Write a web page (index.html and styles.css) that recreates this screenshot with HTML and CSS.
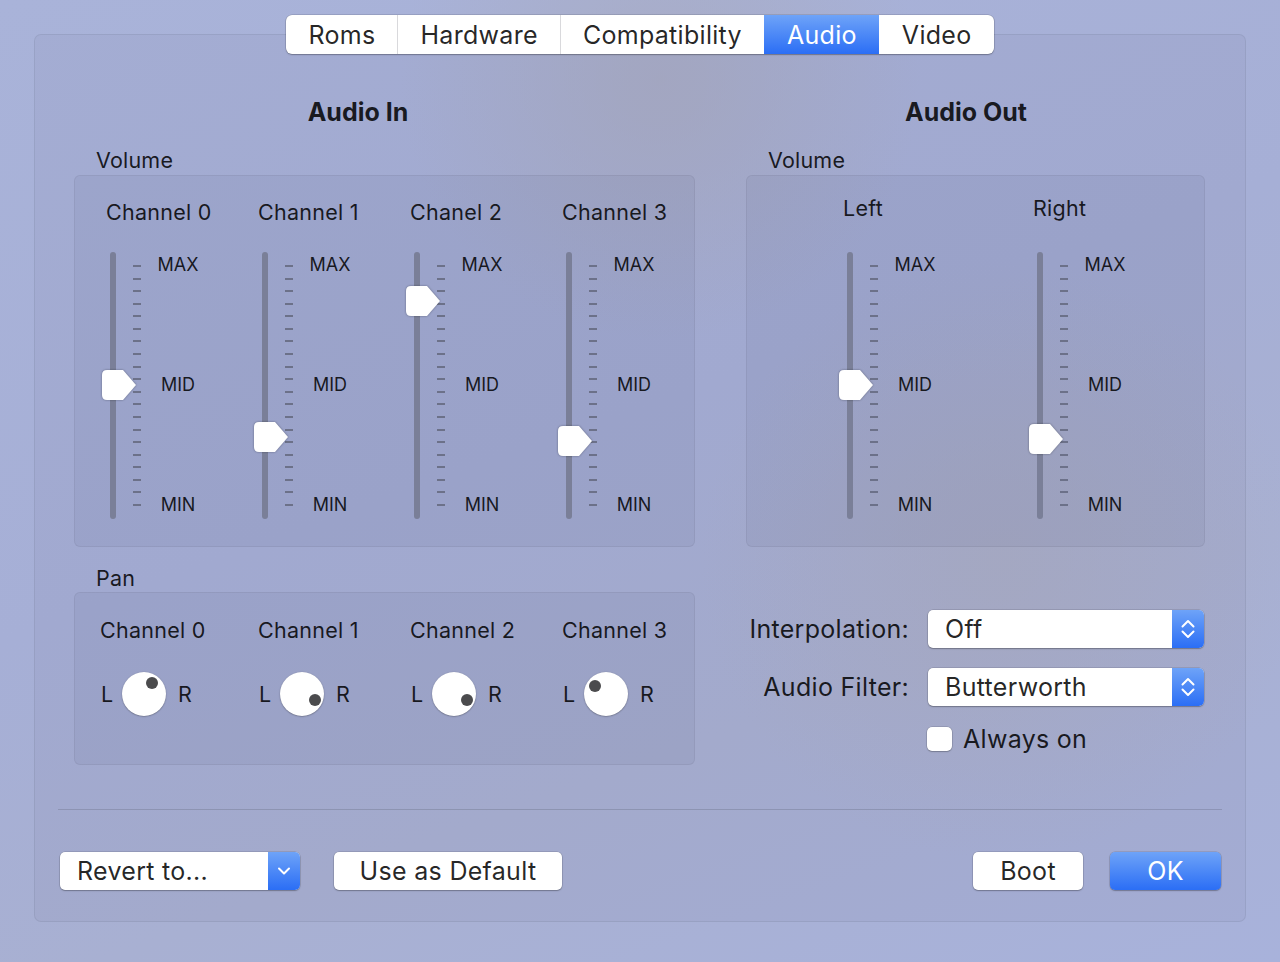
FILE: index.html
```html
<!DOCTYPE html>
<html>
  <head>
    <title>Audio Settings</title>
    <link rel="stylesheet" href="styles.css">
  </head>
  <body>
    <nav class="tabs">
      <span class="tab">Roms</span>
      <span class="tab">Hardware</span>
      <span class="tab">Compatibility</span>
      <span class="tab active">Audio</span>
      <span class="tab">Video</span>
    </nav>

    <div class="pane">
      <div class="columns">
        <!-- input side: four channel faders and pan knobs -->
        <section class="col col-in">
          <h2 class="col-title">Audio In</h2>
          <div class="group-label">Volume</div>
          <div class="box faders">
            <div class="fader">
              <div class="fader-name">Channel 0</div>
              <div class="fader-body">
                <div class="track"></div>
                <div class="ticks"><i></i><i></i><i></i><i></i><i></i><i></i><i></i><i></i><i></i><i></i><i></i><i></i><i></i><i></i><i></i><i></i><i></i><i></i><i></i><i></i></div>
                <div class="scale"><span>MAX</span><span>MID</span><span>MIN</span></div>
                <svg class="thumb" style="top:118px" width="36" height="32" viewBox="-1 -1 36 32"><path d="M5 0H21L34 15L21 30H5Q0 30 0 25V5Q0 0 5 0Z"/></svg>
              </div>
            </div>
            <div class="fader">
              <div class="fader-name">Channel 1</div>
              <div class="fader-body">
                <div class="track"></div>
                <div class="ticks"><i></i><i></i><i></i><i></i><i></i><i></i><i></i><i></i><i></i><i></i><i></i><i></i><i></i><i></i><i></i><i></i><i></i><i></i><i></i><i></i></div>
                <div class="scale"><span>MAX</span><span>MID</span><span>MIN</span></div>
                <svg class="thumb" style="top:170px" width="36" height="32" viewBox="-1 -1 36 32"><path d="M5 0H21L34 15L21 30H5Q0 30 0 25V5Q0 0 5 0Z"/></svg>
              </div>
            </div>
            <div class="fader">
              <div class="fader-name">Chanel 2</div>
              <div class="fader-body">
                <div class="track"></div>
                <div class="ticks"><i></i><i></i><i></i><i></i><i></i><i></i><i></i><i></i><i></i><i></i><i></i><i></i><i></i><i></i><i></i><i></i><i></i><i></i><i></i><i></i></div>
                <div class="scale"><span>MAX</span><span>MID</span><span>MIN</span></div>
                <svg class="thumb" style="top:34px" width="36" height="32" viewBox="-1 -1 36 32"><path d="M5 0H21L34 15L21 30H5Q0 30 0 25V5Q0 0 5 0Z"/></svg>
              </div>
            </div>
            <div class="fader">
              <div class="fader-name">Channel 3</div>
              <div class="fader-body">
                <div class="track"></div>
                <div class="ticks"><i></i><i></i><i></i><i></i><i></i><i></i><i></i><i></i><i></i><i></i><i></i><i></i><i></i><i></i><i></i><i></i><i></i><i></i><i></i><i></i></div>
                <div class="scale"><span>MAX</span><span>MID</span><span>MIN</span></div>
                <svg class="thumb" style="top:174px" width="36" height="32" viewBox="-1 -1 36 32"><path d="M5 0H21L34 15L21 30H5Q0 30 0 25V5Q0 0 5 0Z"/></svg>
              </div>
            </div>
          </div>

          <div class="group-label pan-label">Pan</div>
          <div class="box pans">
            <div class="pan">
              <div class="pan-name">Channel 0</div>
              <div class="pan-row">
                <span class="side">L</span>
                <span class="knob"><b style="left:24px;top:5px"></b></span>
                <span class="side side-r">R</span>
              </div>
            </div>
            <div class="pan">
              <div class="pan-name">Channel 1</div>
              <div class="pan-row">
                <span class="side">L</span>
                <span class="knob"><b style="left:29px;top:22px"></b></span>
                <span class="side side-r">R</span>
              </div>
            </div>
            <div class="pan">
              <div class="pan-name">Channel 2</div>
              <div class="pan-row">
                <span class="side">L</span>
                <span class="knob"><b style="left:29px;top:22px"></b></span>
                <span class="side side-r">R</span>
              </div>
            </div>
            <div class="pan">
              <div class="pan-name">Channel 3</div>
              <div class="pan-row">
                <span class="side">L</span>
                <span class="knob"><b style="left:5px;top:8px"></b></span>
                <span class="side side-r">R</span>
              </div>
            </div>
          </div>
        </section>

        <!-- output side: stereo faders and filter options -->
        <section class="col col-out">
          <h2 class="col-title">Audio Out</h2>
          <div class="group-label">Volume</div>
          <div class="box faders faders-out">
            <div class="fader">
              <div class="fader-name">Left</div>
              <div class="fader-body">
                <div class="track"></div>
                <div class="ticks"><i></i><i></i><i></i><i></i><i></i><i></i><i></i><i></i><i></i><i></i><i></i><i></i><i></i><i></i><i></i><i></i><i></i><i></i><i></i><i></i></div>
                <div class="scale"><span>MAX</span><span>MID</span><span>MIN</span></div>
                <svg class="thumb" style="top:118px" width="36" height="32" viewBox="-1 -1 36 32"><path d="M5 0H21L34 15L21 30H5Q0 30 0 25V5Q0 0 5 0Z"/></svg>
              </div>
            </div>
            <div class="fader">
              <div class="fader-name">Right</div>
              <div class="fader-body">
                <div class="track"></div>
                <div class="ticks"><i></i><i></i><i></i><i></i><i></i><i></i><i></i><i></i><i></i><i></i><i></i><i></i><i></i><i></i><i></i><i></i><i></i><i></i><i></i><i></i></div>
                <div class="scale"><span>MAX</span><span>MID</span><span>MIN</span></div>
                <svg class="thumb" style="top:172px" width="36" height="32" viewBox="-1 -1 36 32"><path d="M5 0H21L34 15L21 30H5Q0 30 0 25V5Q0 0 5 0Z"/></svg>
              </div>
            </div>
          </div>

          <div class="options">
            <label class="opt-label">Interpolation:</label>
            <div class="popup">
              <span class="popup-value">Off</span>
              <span class="popup-arrows">
                <svg width="14" height="24" viewBox="0 0 14 24"><path d="M1.5 9.5L7 4L12.5 9.5M1.5 14.5L7 20L12.5 14.5"/></svg>
              </span>
            </div>
            <label class="opt-label">Audio Filter:</label>
            <div class="popup">
              <span class="popup-value">Butterworth</span>
              <span class="popup-arrows">
                <svg width="14" height="24" viewBox="0 0 14 24"><path d="M1.5 9.5L7 4L12.5 9.5M1.5 14.5L7 20L12.5 14.5"/></svg>
              </span>
            </div>
            <span></span>
            <label class="check"><span class="checkbox"></span>Always on</label>
          </div>
        </section>
      </div>

      <hr class="separator">

      <div class="actions">
        <div class="popup revert">
          <span class="popup-value">Revert to...</span>
          <span class="popup-arrows">
            <svg width="14" height="12" viewBox="0 0 14 12"><path d="M2 3.5L7 8.5L12 3.5"/></svg>
          </span>
        </div>
        <button class="btn default-btn">Use as Default</button>
        <span class="spacer"></span>
        <button class="btn boot-btn">Boot</button>
        <button class="btn btn-primary">OK</button>
      </div>
    </div>
  </body>
</html>
```

FILE: styles.css
```css
html, body {
  margin: 0;
  height: 100%;
}
body {
  font-family: Inter, "Noto Sans", Arial, sans-serif;
  color: rgba(0, 0, 0, 0.86);
  padding-top: 15px;
  box-sizing: border-box;
  background:
    radial-gradient(circle at 660px 80px, rgba(168, 170, 190, 0.7), rgba(168, 170, 190, 0) 260px),
    radial-gradient(circle at 1000px 560px, rgba(170, 172, 192, 0.6), rgba(170, 172, 192, 0) 300px),
    linear-gradient(160deg, #a9b3d9 0%, #a6afd6 45%, #a8b0d2 70%, #a8b2db 100%);
}

/* segmented tab control */
.tabs {
  display: flex;
  width: max-content;
  margin: 0 auto -20px;
  position: relative;
  z-index: 1;
  height: 39px;
  background: #fff;
  border-radius: 6px;
  box-shadow: 0 0 0 0.5px rgba(0, 0, 0, 0.2), 0 1px 1.5px rgba(0, 0, 0, 0.25);
  overflow: hidden;
}
.tab {
  display: flex;
  align-items: center;
  padding: 0 22px;
  font-size: 25px;
  letter-spacing: 0.3px;
  border-left: 1px solid #d9d9dc;
}
.tab:first-child {
  border-left: none;
}
.tab.active {
  color: #fff;
  border-left-color: transparent;
  background: linear-gradient(#6ea3f8, #2b6ef5);
}
.tab.active + .tab {
  border-left-color: transparent;
}

/* main pane */
.pane {
  margin: 0 34px;
  height: 888px;
  box-sizing: border-box;
  border: 1px solid rgba(0, 0, 0, 0.06);
  border-radius: 7px;
  background: rgba(40, 40, 70, 0.035);
  padding-top: 62px;
}
.columns {
  display: grid;
  grid-template-columns: 621px 459px;
  column-gap: 51px;
  margin-left: 39px;
}
.col-title {
  margin: 0;
  height: 30px;
  line-height: 30px;
  font-size: 25px;
  font-weight: 700;
  text-align: center;
  padding-right: 53px;
}
.col-out .col-title {
  padding-right: 19px;
}
.group-label {
  margin: 20px 0 2px 22px;
  height: 26px;
  line-height: 26px;
  font-size: 21.5px;
  letter-spacing: 0.2px;
}
.pan-label {
  margin-top: 18px;
  margin-bottom: 1px;
}
.box {
  box-sizing: border-box;
  border: 1px solid rgba(0, 0, 0, 0.05);
  border-radius: 6px;
  background: rgba(40, 40, 80, 0.05);
}

/* vertical faders */
.faders {
  height: 372px;
  display: flex;
  padding: 23px 0 0 31px;
}
.faders-out {
  padding: 19px 0 0 96px;
}
.fader {
  flex: 0 0 152px;
}
.faders-out .fader {
  flex-basis: 190px;
}
.fader-name {
  height: 26px;
  line-height: 26px;
  font-size: 21.5px;
  letter-spacing: 0.25px;
  margin-bottom: 27px;
  white-space: nowrap;
}
.faders-out .fader-name {
  margin-bottom: 31px;
}
.fader-body {
  position: relative;
  display: flex;
  height: 267px;
}
.track {
  width: 6px;
  margin-left: 4px;
  border-radius: 3px;
  background: #7a7f98;
}
.ticks {
  display: flex;
  flex-direction: column;
  justify-content: space-between;
  width: 8px;
  margin-left: 17px;
  padding: 13px 0;
}
.ticks i {
  display: block;
  height: 2px;
  background: #6c7189;
}
.scale {
  display: flex;
  flex-direction: column;
  justify-content: space-between;
  align-items: center;
  width: 74px;
  padding: 3px 0 4px;
  font-size: 18px;
  line-height: 20px;
}
.thumb {
  position: absolute;
  left: -5px;
  margin-top: -1px;
  fill: #fff;
  filter: drop-shadow(0 0.5px 0.8px rgba(0, 0, 0, 0.35));
}

/* pan knobs */
.pans {
  height: 173px;
  display: grid;
  grid-template-columns: 158px 152px 152px 152px;
  padding: 24px 0 0 25px;
}
.pan-name {
  height: 26px;
  line-height: 26px;
  font-size: 21.5px;
  letter-spacing: 0.25px;
  white-space: nowrap;
}
.pan-row {
  display: flex;
  align-items: center;
  margin-top: 29px;
  height: 44px;
  font-size: 21.5px;
}
.side {
  width: 12px;
  margin-left: 1px;
}
.side-r {
  margin-left: 12px;
}
.knob {
  position: relative;
  width: 44px;
  height: 44px;
  margin-left: 9px;
  border-radius: 50%;
  background: #fff;
  box-shadow: 0 0.5px 1.5px rgba(0, 0, 0, 0.4);
}
.knob b {
  position: absolute;
  width: 12px;
  height: 12px;
  border-radius: 50%;
  background: #4b4b4d;
}

/* right column options */
.options {
  display: grid;
  grid-template-columns: 163px 276px;
  column-gap: 19px;
  row-gap: 20px;
  align-items: center;
  margin-top: 63px;
}
.opt-label {
  text-align: right;
  font-size: 25px;
  letter-spacing: 0.3px;
  white-space: nowrap;
}
.popup {
  display: flex;
  height: 38px;
  border-radius: 5px;
  background: #fff;
  box-shadow: 0 0 0 0.5px rgba(0, 0, 0, 0.18), 0 1px 1.5px rgba(0, 0, 0, 0.25);
  overflow: hidden;
}
.popup-value {
  flex: 1;
  padding-left: 17px;
  font-size: 25px;
  letter-spacing: 0.3px;
  line-height: 38px;
}
.popup-arrows {
  width: 32px;
  display: flex;
  align-items: center;
  justify-content: center;
  background: linear-gradient(#6ea3f8, #2b6ef5);
}
.popup-arrows svg {
  fill: none;
  stroke: #fff;
  stroke-width: 2;
  stroke-linecap: round;
  stroke-linejoin: round;
}
.check {
  display: flex;
  align-items: center;
  height: 26px;
  font-size: 25px;
  letter-spacing: 0.3px;
  margin-left: -1px;
}
.checkbox {
  width: 25px;
  height: 24px;
  margin-right: 11px;
  border-radius: 5px;
  background: #fff;
  box-shadow: 0 0 0 0.5px rgba(0, 0, 0, 0.2), 0 1px 1.5px rgba(0, 0, 0, 0.2);
}

/* bottom bar */
.separator {
  margin: 44px 23px 0;
  border: none;
  height: 1px;
  background: rgba(0, 0, 0, 0.13);
}
.actions {
  display: flex;
  margin: 42px 24px 0 25px;
}
.revert {
  width: 240px;
}
.btn {
  height: 38px;
  border: none;
  border-radius: 5px;
  background: #fff;
  font-family: inherit;
  font-size: 25px;
  letter-spacing: 0.3px;
  color: rgba(0, 0, 0, 0.86);
  padding: 0;
  box-shadow: 0 0 0 0.5px rgba(0, 0, 0, 0.18), 0 1px 1.5px rgba(0, 0, 0, 0.25);
}
.default-btn {
  width: 228px;
  margin-left: 34px;
}
.spacer {
  flex: 1;
}
.boot-btn {
  width: 110px;
}
.btn-primary {
  width: 111px;
  margin-left: 27px;
  color: #fff;
  background: linear-gradient(#6ea3f8, #2b6ef5);
}
```
